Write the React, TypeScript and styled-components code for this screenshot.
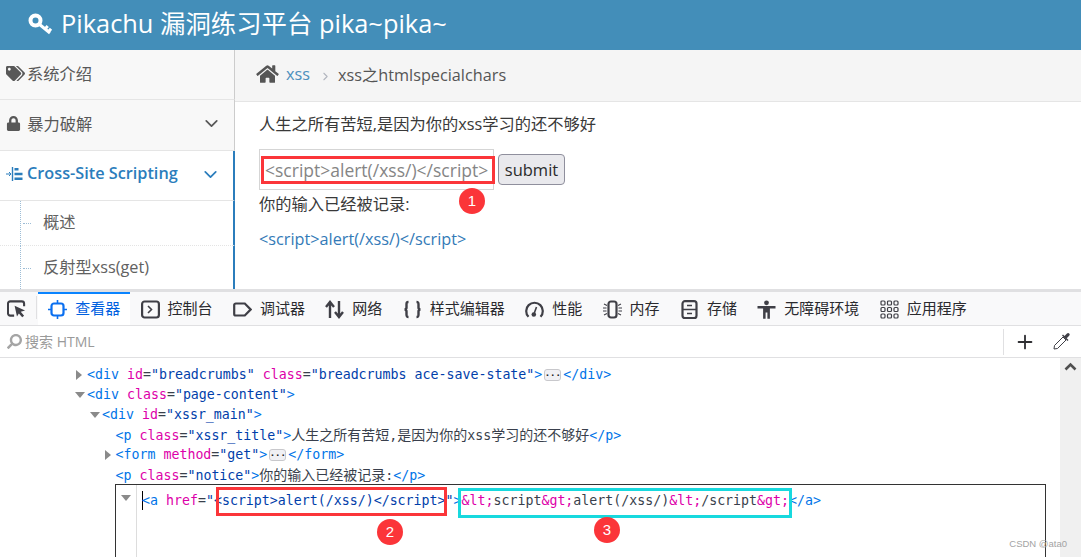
import styled, { createGlobalStyle } from "styled-components";
import { FaTags, FaLock, FaHome, FaSearch } from "react-icons/fa";
import { ChevronDown, ChevronRight, Plus } from "lucide-react";

const SANS = `"Open Sans", "Noto Sans CJK SC", sans-serif`;
const MONO = `"DejaVu Sans Mono", "Noto Sans CJK SC", monospace`;
const BLUE = "#2b7dbc";
const RED = "#fb3539";

const GlobalStyle = createGlobalStyle`
  html, body { margin: 0; padding: 0; background: #fff; }
  * { box-sizing: border-box; }
`;

const Page = styled.div`
  position: relative;
  width: 1081px;
  height: 557px;
  overflow: hidden;
  font-family: ${SANS};
  display: flex;
  flex-direction: column;
`;

const Header = styled.header`
  height: 50px;
  flex: none;
  background: #438eb9;
  color: #fff;
  display: flex;
  align-items: center;
  padding: 0 0 6px 28px;
  gap: 8px;
  font-size: 25.4px;
`;

const KeyIcon = styled.svg`
  width: 25px;
  height: 22px;
  flex: none;
  margin-top: 3px;
`;

const Main = styled.div`
  height: 239px;
  flex: none;
  display: flex;
  overflow: hidden;
`;

const Sidebar = styled.nav`
  width: 235px;
  flex: none;
  display: flex;
  flex-direction: column;
`;

const NavRow = styled.div<{ $active?: boolean }>`
  height: 50.34px;
  flex: none;
  display: flex;
  align-items: center;
  padding: 0 12px 0 6px;
  gap: 2px;
  font-size: 16.25px;
  background: ${(p) => (p.$active ? "#fff" : "#f8f8f8")};
  color: ${(p) => (p.$active ? BLUE : "#585858")};
  font-weight: ${(p) => (p.$active ? 600 : 400)};
  border-bottom: 1px solid #e5e5e5;
  border-right: ${(p) => (p.$active ? `2px solid ${BLUE}` : "1px solid #ccc")};
  svg.lead { flex: none; margin-bottom: 2px; }
`;

const NavLabel = styled.span`
  flex: 1;
  padding-bottom: 4px;
  white-space: nowrap;
`;

const Chevron = styled(ChevronDown)`
  width: 21px;
  height: 21px;
  flex: none;
  margin-bottom: 2px;
`;

const SubRow = styled.div`
  position: relative;
  height: 45px;
  flex: none;
  display: flex;
  align-items: center;
  padding: 0 0 4px 43px;
  font-size: 16.25px;
  color: #616161;
  background: #fff;
  border-right: 2px solid ${BLUE};
  border-bottom: 1px dotted #e4e4e4;

  &::before {
    content: "";
    position: absolute;
    left: 20px;
    top: 0;
    bottom: -1px;
    border-left: 1px dotted #9dbdd6;
  }

  &::after {
    content: "";
    position: absolute;
    left: 23px;
    top: 22px;
    width: 8px;
    border-top: 1px dotted #9dbdd6;
  }
`;

const Content = styled.main`
  flex: 1;
  display: flex;
  flex-direction: column;
`;

const Breadcrumbs = styled.div`
  height: 52px;
  flex: none;
  background: #f5f5f5;
  border-bottom: 1px solid #e5e5e5;
  display: flex;
  align-items: center;
  padding: 0 0 3px 21px;
  font-size: 16.25px;
  color: #555;
`;

const HomeIcon = styled(FaHome)`
  width: 23px;
  height: 20px;
  color: #555;
  margin-right: 7px;
`;

const CrumbLink = styled.a`
  color: #4c8fbd;
`;

const CrumbSep = styled(ChevronRight)`
  width: 13px;
  height: 13px;
  color: #b2b6bf;
  margin: 5px 6px 0 9px;
`;

const Body = styled.div`
  padding: 10px 0 0 24px;
  font-size: 16.25px;
  color: #393939;
`;

const Title = styled.p`
  margin: 0 0 13px;
  line-height: 24px;
`;

const Form = styled.form`
  display: flex;
  align-items: center;
  gap: 4px;
  height: 41px;
`;

const PayloadInput = styled.input`
  width: 235px;
  height: 41px;
  padding: 0 4px 0 5px;
  border: 1px solid #d5d5d5;
  background: #fff;
  color: #858585;
  font: 17.5px ${SANS};
  outline: none;
`;

const Submit = styled.button`
  width: 67px;
  height: 31px;
  padding: 0;
  border: 1px solid #8f8f9d;
  border-radius: 4px;
  background: #e9e9ed;
  color: #2b2b2b;
  font: 16.5px ${SANS};
`;

const Notice = styled.p`
  margin: 1px 0 0;
  line-height: 26px;
`;

const EchoLink = styled.a`
  display: block;
  margin-top: 10px;
  line-height: 24px;
  color: #337ab7;
`;

const Devtools = styled.section`
  flex: 1;
  min-height: 0;
  display: flex;
  flex-direction: column;
  border-top: 3px solid #e0e0e2;
  background: #fff;
`;

const Toolbar = styled.div`
  height: 34px;
  flex: none;
  display: flex;
  align-items: stretch;
  background: #f9f9fa;
  border-bottom: 1px solid #e0e0e2;
`;

const PickerCell = styled.div`
  width: 38px;
  flex: none;
  display: flex;
  align-items: center;
  padding-left: 7px;
  position: relative;
  &::after {
    content: "";
    position: absolute;
    right: 1px;
    top: 4px;
    bottom: 6px;
    border-right: 1px solid #e0e0e2;
  }
`;

const Tab = styled.div<{ $active?: boolean }>`
  display: flex;
  align-items: center;
  gap: 8px;
  padding: 0 10.2px 1px;
  font-size: 15px;
  white-space: nowrap;
  color: ${(p) => (p.$active ? "#0060df" : "#2a2a2e")};
  border-top: 2px solid ${(p) => (p.$active ? "#0a84ff" : "transparent")};
  background: ${(p) => (p.$active ? "#fff" : "transparent")};
`;

const TabLabel = styled.span`
  padding-bottom: 4px;
`;

const Glyph = styled.svg`
  width: 19px;
  height: 19px;
  flex: none;
  fill: none;
  stroke: #3f3f46;
  stroke-width: 2.2;
`;

const ActiveGlyph = styled(Glyph)`
  stroke: #0a6ff0;
`;

const SolidGlyph = styled(Glyph)`
  fill: #3f3f46;
  stroke: none;
`;

const SearchRow = styled.div`
  height: 32px;
  flex: none;
  display: flex;
  align-items: center;
  padding-left: 7px;
  border-bottom: 1px solid #e0e0e2;
  color: #9a9a9a;
  font-size: 14px;
`;

const SearchIcon = styled(FaSearch)`
  width: 15px;
  height: 15px;
  margin-right: 3px;
  color: #a5a5a5;
  transform: scaleX(-1);
`;

const SearchLabel = styled.span`
  flex: 1;
  padding-bottom: 2px;
`;

const SearchActions = styled.div`
  height: 26px;
  display: flex;
  align-items: center;
  border-left: 1px solid #e0e0e2;
  padding: 0 10px;
  gap: 16px;
`;

const PlusIcon = styled(Plus)`
  width: 22px;
  height: 22px;
  color: #2f2f33;
`;

const Inspector = styled.div`
  flex: 1;
  min-height: 0;
  display: flex;
`;

const Markup = styled.div`
  flex: 1;
  padding-top: 7px;
  font: 13.28px/20px ${MONO};
  color: #393f4c;
  white-space: pre;
  overflow: hidden;
`;

const Line = styled.div<{ $indent: number }>`
  height: 20px;
  padding-left: ${(p) => p.$indent}px;
  display: flex;
  align-items: center;
`;

const Twisty = styled.span<{ $open?: boolean }>`
  width: 11px;
  flex: none;
  &::before {
    content: "";
    display: block;
    width: 0;
    height: 0;
    ${(p) =>
      p.$open
        ? `margin-left: -1px;
           border-left: 5px solid transparent;
           border-right: 5px solid transparent;
           border-top: 6px solid #8a8a8a;`
        : `border-top: 5px solid transparent;
           border-bottom: 5px solid transparent;
           border-left: 6px solid #8a8a8a;`}
  }
`;

const Tag = styled.span`
  color: #0074e8;
`;
const Attr = styled.span`
  color: #dd00a9;
`;
const Val = styled.span`
  color: #003eaa;
`;
const Entity = styled.span`
  color: #dd00a9;
`;
const Cjk = styled.span`
  font-size: 14px;
`;

const Dots = styled.span`
  display: inline-flex;
  align-items: center;
  justify-content: center;
  width: 17px;
  height: 12px;
  margin: 0 2px;
  border: 1px solid #c8c8cc;
  border-radius: 3px;
  background: #f0f0f4;
  color: #222;
  font-size: 9px;
  font-weight: 700;
  line-height: 8px;
`;

const EditBox = styled.div`
  margin: -1px 0 0 115px;
  width: 931px;
  height: 80px;
  border: 1px solid #333;
  border-bottom: none;
  display: flex;
`;

const Gutter = styled.div`
  width: 21px;
  flex: none;
  border-right: 1px solid #ddd;
  padding: 10px 0 0 6px;
`;

const EditText = styled.div`
  padding: 6px 0 0 5px;
  height: 30px;
  display: flex;
  align-items: flex-start;
`;

const Caret = styled.span`
  display: inline-block;
  width: 1px;
  height: 19px;
  margin-right: -1px;
  background: #000;
`;

const Scrollbar = styled.div`
  width: 21px;
  flex: none;
  background: #f0f0f0;
  display: flex;
  justify-content: center;
  padding-top: 2px;
  color: #505050;
`;

const Mark = styled.div<{ $x: number; $y: number; $w: number; $h: number; $color: string }>`
  position: absolute;
  left: ${(p) => p.$x}px;
  top: ${(p) => p.$y}px;
  width: ${(p) => p.$w}px;
  height: ${(p) => p.$h}px;
  border: 3px solid ${(p) => p.$color};
  pointer-events: none;
`;

const Badge = styled.div<{ $x: number; $y: number }>`
  position: absolute;
  left: ${(p) => p.$x - 13}px;
  top: ${(p) => p.$y - 13}px;
  width: 26px;
  height: 26px;
  border-radius: 50%;
  background: ${RED};
  color: #fff;
  font: 15px/26px "Liberation Sans", sans-serif;
  text-align: center;
`;

const Watermark = styled.div`
  position: absolute;
  right: 14px;
  bottom: 7px;
  color: #a3a3a3;
  font: 9.5px/12px "Liberation Sans", "Noto Sans CJK SC", sans-serif;
`;

const IndentIcon = () => (
  <svg className="lead" width="19" height="16" viewBox="0 0 19 16">
    <path d="M0 8h4.500M3 6l2 2-2 2" fill="none" stroke="currentColor" strokeWidth="1" />
    <path d="M6.500 1v14" stroke="currentColor" strokeWidth="1.400" />
    <path d="M8.500 2h4v2.500h-4zM8.500 6.700h8v2.500h-8zM8.500 11.500h8V14h-8z" fill="currentColor" />
  </svg>
);

const tabs = [
  {
    label: "控制台",
    icon: (
      <Glyph viewBox="0 0 19 19">
        <rect x="1.100" y="1.500" width="16.800" height="16" rx="2.500" />
        <path d="M7 6l3.500 3.500L7 13" strokeWidth="1.600" />
      </Glyph>
    ),
  },
  {
    label: "调试器",
    icon: (
      <Glyph viewBox="0 0 19 19">
        <path d="M2.800 3.500h9l5.800 6-5.800 6h-9a1.600 1.600 0 0 1-1.600-1.600V5.100a1.600 1.600 0 0 1 1.600-1.600z" />
      </Glyph>
    ),
  },
  {
    label: "网络",
    icon: (
      <Glyph viewBox="0 0 19 19">
        <path d="M5 18V3M1 7l4-5 4 5M14 1v15M10 12l4 5 4-5" strokeWidth="2.400" />
      </Glyph>
    ),
  },
  {
    label: "样式编辑器",
    icon: (
      <Glyph viewBox="0 0 19 19">
        <path
          d="M5.500 2C3.500 2 3.500 3 3.500 4.500v3C3.500 8.800 2.500 9.500 1.500 9.500c1 0 2 .7 2 2v3c0 1.500 0 2.500 2 2.500M13.500 2c2 0 2 1 2 2.500v3c0 1.300 1 2 2 2-1 0-2 .7-2 2v3c0 1.500 0 2.500-2 2.500"
          strokeWidth="2.400"
        />
      </Glyph>
    ),
  },
  {
    label: "性能",
    icon: (
      <Glyph viewBox="0 0 19 19">
        <path d="M3.500 16.800A8.300 8.300 0 1 1 15.500 16.800" />
        <path d="M9.300 13L11.500 7" strokeWidth="1.600" />
        <circle cx="8.800" cy="14.500" r="2.300" fill="#3f3f46" stroke="none" />
      </Glyph>
    ),
  },
  {
    label: "内存",
    icon: (
      <Glyph viewBox="0 0 19 19">
        <rect x="5.500" y="1.500" width="8" height="16" rx="2.500" />
        <path
          d="M1 4l3 1.500M0 8h3.500M0 11h3.500M1 15l3-1.500M18 4l-3 1.500M19 8h-3.500M19 11h-3.500M18 15l-3-1.500"
          strokeWidth="1.100"
        />
      </Glyph>
    ),
  },
  {
    label: "存储",
    icon: (
      <Glyph viewBox="0 0 19 19">
        <rect x="2.500" y="1.200" width="14" height="17" rx="2.500" />
        <path d="M2.500 9.500h14M7 5.500h5M7 13.500h5" strokeWidth="1.600" />
      </Glyph>
    ),
  },
  {
    label: "无障碍环境",
    icon: (
      <SolidGlyph viewBox="0 0 19 19">
        <circle cx="9.500" cy="2.800" r="2.400" />
        <path d="M.500 6h18v2.400h-5.600V18.800H10.400v-6.300h-1.800v6.300H6.100V8.400H.500z" />
      </SolidGlyph>
    ),
  },
  {
    label: "应用程序",
    icon: (
      <Glyph viewBox="0 0 19 19">
        {[1, 7.5, 14].map((y) =>
          [1, 7.5, 14].map((x) => (
            <rect key={`${x}-${y}`} x={x} y={y} width="4" height="4" rx="1" strokeWidth="1.200" />
          ))
        )}
      </Glyph>
    ),
  },
];

const App = () => (
  <Page>
    <GlobalStyle />
    <Header>
      <KeyIcon viewBox="0 0 25 22">
        <circle cx="7.500" cy="7.500" r="5" fill="none" stroke="#fff" strokeWidth="4" />
        <path
          d="M11 11l11 9M17.200 16l2.500-3M20.500 18.800l2.500-3"
          fill="none"
          stroke="#fff"
          strokeWidth="3"
        />
      </KeyIcon>
      <span>Pikachu 漏洞练习平台 pika~pika~</span>
    </Header>

    <Main>
      <Sidebar>
        <NavRow>
          <FaTags className="lead" size={19} />
          <NavLabel>系统介绍</NavLabel>
        </NavRow>
        <NavRow>
          <FaLock className="lead" size={15} />
          <NavLabel>&nbsp;暴力破解</NavLabel>
          <Chevron />
        </NavRow>
        <NavRow $active>
          <IndentIcon />
          <NavLabel>Cross-Site Scripting</NavLabel>
          <Chevron />
        </NavRow>
        <SubRow>概述</SubRow>
        <SubRow>反射型xss(get)</SubRow>
      </Sidebar>

      <Content>
        <Breadcrumbs>
          <HomeIcon />
          <CrumbLink>xss</CrumbLink>
          <CrumbSep />
          <span>xss之htmlspecialchars</span>
        </Breadcrumbs>
        <Body>
          <Title>人生之所有苦短,是因为你的xss学习的还不够好</Title>
          <Form>
            <PayloadInput readOnly value="<script>alert(/xss/)</script>" />
            <Submit type="button">submit</Submit>
          </Form>
          <Notice>你的输入已经被记录:</Notice>
          <EchoLink>{"<script>alert(/xss/)</script>"}</EchoLink>
        </Body>
      </Content>
    </Main>

    <Devtools>
      <Toolbar>
        <PickerCell>
          <Glyph viewBox="0 0 20 19">
            <path d="M7.500 17H3.500A2.500 2.500 0 0 1 1 14.500v-10A2.500 2.500 0 0 1 3.500 2h12A2.500 2.500 0 0 1 18 4.500V7" />
            <path d="M8 6.500l11 5-4.500 1.500 3.500 4-2 1.800-3.500-4-2 3z" fill="#3f3f46" stroke="none" />
          </Glyph>
        </PickerCell>
        <Tab $active>
          <ActiveGlyph viewBox="0 0 19 19">
            <rect x="3.500" y="3.500" width="12" height="12" rx="2.500" />
            <path d="M9.500 0v3M9.500 16v3M0 9.500h3M16 9.500h3" strokeWidth="1.600" />
          </ActiveGlyph>
          <TabLabel>查看器</TabLabel>
        </Tab>
        {tabs.map((t) => (
          <Tab key={t.label}>
            {t.icon}
            <TabLabel>{t.label}</TabLabel>
          </Tab>
        ))}
      </Toolbar>

      <SearchRow>
        <SearchIcon />
        <SearchLabel>搜索 HTML</SearchLabel>
        <SearchActions>
          <PlusIcon />
          <Glyph viewBox="0 0 19 19">
            <path d="M11 5l3 3-8.500 8.500-3.500.5.500-3.500z" strokeWidth="1" />
            <path
              d="M10 3.500l5.500 5.500 1-1-1.800-1.800 2.500-2.500a1.500 1.500 0 0 0-2.200-2.200l-2.500 2.500L11 2.500z"
              fill="#3f3f46"
              stroke="none"
            />
          </Glyph>
        </SearchActions>
      </SearchRow>

      <Inspector>
        <Markup>
          <Line $indent={76}>
            <Twisty />
            <span>
              <Tag>&lt;div</Tag> <Attr>id</Attr>=<Val>"breadcrumbs"</Val> <Attr>class</Attr>=
              <Val>"breadcrumbs ace-save-state"</Val>
              <Tag>&gt;</Tag>
            </span>
            <Dots>···</Dots>
            <Tag>&lt;/div&gt;</Tag>
          </Line>
          <Line $indent={76}>
            <Twisty $open />
            <span>
              <Tag>&lt;div</Tag> <Attr>class</Attr>=<Val>"page-content"</Val>
              <Tag>&gt;</Tag>
            </span>
          </Line>
          <Line $indent={91}>
            <Twisty $open />
            <span>
              <Tag>&lt;div</Tag> <Attr>id</Attr>=<Val>"xssr_main"</Val>
              <Tag>&gt;</Tag>
            </span>
          </Line>
          <Line $indent={115.5}>
            <span>
              <Tag>&lt;p</Tag> <Attr>class</Attr>=<Val>"xssr_title"</Val>
              <Tag>&gt;</Tag>
              <Cjk>人生之所有苦短</Cjk>,<Cjk>是因为你的</Cjk>xss<Cjk>学习的还不够好</Cjk>
              <Tag>&lt;/p&gt;</Tag>
            </span>
          </Line>
          <Line $indent={104.5}>
            <Twisty />
            <span>
              <Tag>&lt;form</Tag> <Attr>method</Attr>=<Val>"get"</Val>
              <Tag>&gt;</Tag>
            </span>
            <Dots>···</Dots>
            <Tag>&lt;/form&gt;</Tag>
          </Line>
          <Line $indent={115.5}>
            <span>
              <Tag>&lt;p</Tag> <Attr>class</Attr>=<Val>"notice"</Val>
              <Tag>&gt;</Tag>
              <Cjk>你的输入已经被记录</Cjk>:<Tag>&lt;/p&gt;</Tag>
            </span>
          </Line>
          <EditBox>
            <Gutter>
              <Twisty $open />
            </Gutter>
            <EditText>
              <Caret />
              <span>
                <Tag>&lt;a</Tag> <Attr>href</Attr>=
                <Val>"&lt;script&gt;alert(/xss/)&lt;/script&gt;"</Val>
                <Tag>&gt;</Tag>
                <Entity>&amp;lt;</Entity>script<Entity>&amp;gt;</Entity>alert(/xss/)
                <Entity>&amp;lt;</Entity>/script<Entity>&amp;gt;</Entity>
                <Tag>&lt;/a&gt;</Tag>
              </span>
            </EditText>
          </EditBox>
        </Markup>
        <Scrollbar>
          <svg width="13" height="13" viewBox="0 0 13 13">
            <path d="M1.500 9.500l5-5 5 5" fill="none" stroke="#505050" strokeWidth="2.600" />
          </svg>
        </Scrollbar>
      </Inspector>
    </Devtools>

    <Mark $x={261} $y={156} $w={234} $h={28} $color={RED} />
    <Mark $x={216} $y={487} $w={231} $h={29} $color={RED} />
    <Mark $x={458} $y={488} $w={334} $h={30} $color="#17d9de" />
    <Badge $x={472} $y={201}>1</Badge>
    <Badge $x={390} $y={532}>2</Badge>
    <Badge $x={607} $y={530}>3</Badge>
    <Watermark>CSDN @ata0</Watermark>
  </Page>
);

export default App;
